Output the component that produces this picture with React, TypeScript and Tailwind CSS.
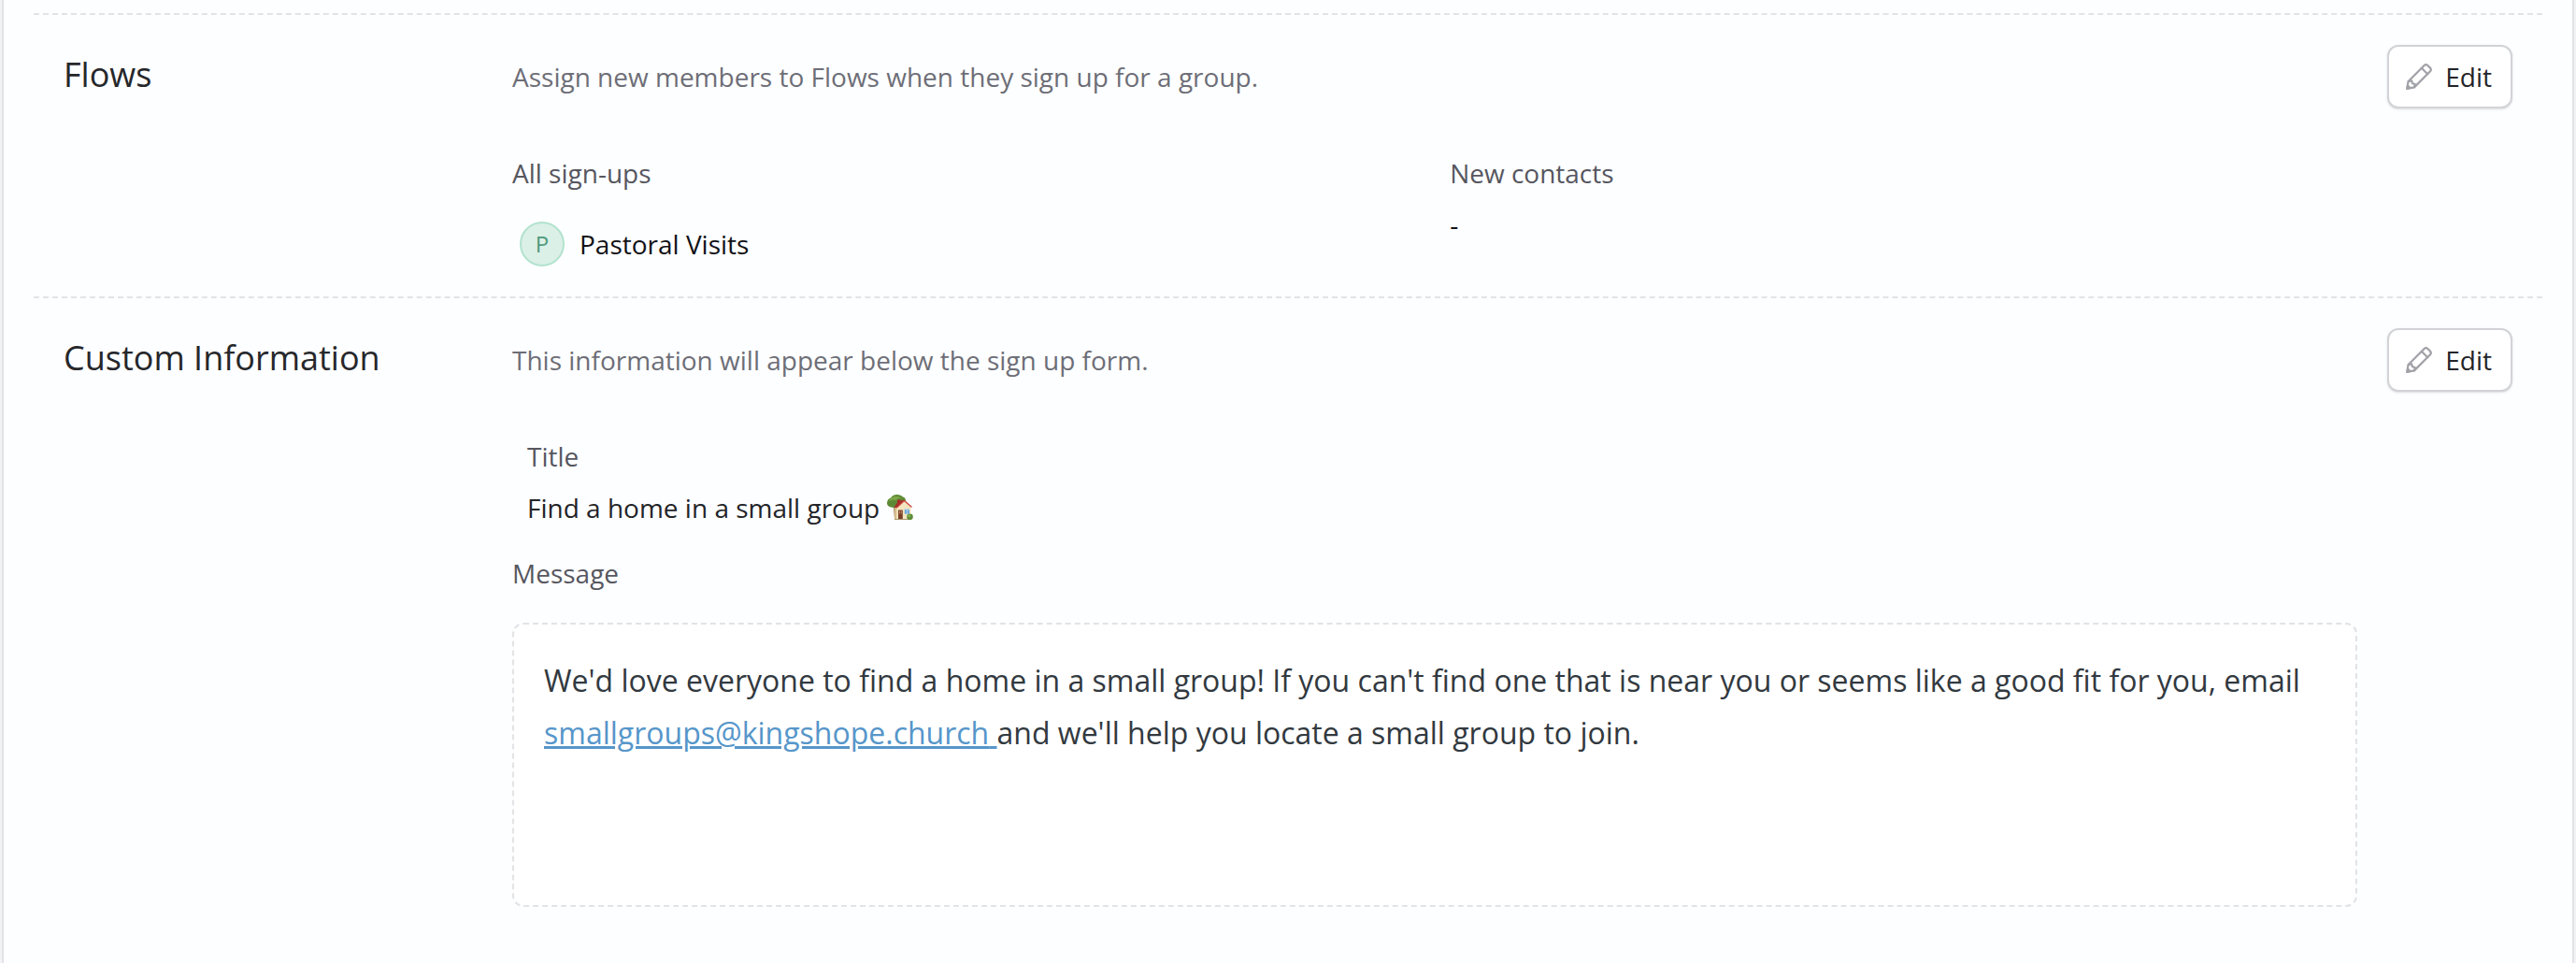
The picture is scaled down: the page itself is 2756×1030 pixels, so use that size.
import type { ReactNode } from "react";

function PencilIcon() {
  return (
    <svg
      viewBox="0 0 28 28"
      className="size-7 shrink-0"
      fill="none"
      stroke="#a1a1a8"
      strokeWidth="2.2"
      strokeLinecap="round"
      strokeLinejoin="round"
      aria-hidden="true"
    >
      <path d="M1.200 26.800 2.600 19 19.400 2.200a3 3 0 0 1 4.200 0l2.200 2.200a3 3 0 0 1 0 4.200L9 25.400Z" />
      <path d="M16.800 4.800 23.200 11.200M2.800 19l3.400-.6 .8 2.800 2.800 .8L9 25.200" />
      <path d="M1.400 26.600 2 23.600 4.400 26Z" fill="#a1a1a8" />
    </svg>
  );
}

function HouseGarden() {
  return (
    <svg viewBox="0 0 28 28" className="inline-block size-7 align-[-3px]" role="img" aria-label="House with garden">
      <path d="M7 12h3v14H8z" fill="#8a6a3c" />
      <path d="M0 9C0 6 2 4 4 3.500 5.500 1 8 0 10.500 0c3 0 5 1 6.500 2.500 2 .5 3 2 3 4.500 0 4-4 7-10 7S0 13 0 9Z" fill="#5c8a34" />
      <path d="M2 7c1-3 4-5 8-5 3 0 5 1 6 2-3-.5-5 .5-6 2-3-.5-6 0-8 1Z" fill="#7fa748" />
      <path d="M8 14.500 18.500 6.500 25.500 13.500V26H8Z" fill="#f4e5bf" />
      <path d="M8 14v12h2.200V13Z" fill="#d6bd88" />
      <path d="M11 5.500h3.500v4H11z" fill="#b02a26" />
      <path d="M7.500 13.800 11.500 7.500 18.500 5.500 16 8.500 10.200 14.200Z" fill="#a3302b" />
      <path d="M10.200 14 18.500 6.500 26.500 13.500" fill="none" stroke="#c9423a" strokeWidth="1.300" strokeLinejoin="round" />
      <path d="M12 16.500h4.800V26H12z" fill="#7b4028" />
      <path d="M13 17.500h1v3h-1zM14.800 17.500h1v3h-1z" fill="#b98561" />
      <path d="M18.800 15.500H24v5.200h-5.200z" fill="#6fa9da" />
      <path d="M18.800 15.500H24v.8h-5.200zM21.200 15.500h.6v5.200h-.6z" fill="#cfe3f2" />
      <path d="M8 26h18v1H8z" fill="#a99a75" />
      <circle cx="24.500" cy="23.800" r="3.300" fill="#5b8b35" />
      <circle cx="23.800" cy="22.800" r="1.600" fill="#85ae4f" />
    </svg>
  );
}

function EditButton({ section }: { section: string }) {
  return (
    <button
      type="button"
      aria-label={`Edit ${section}`}
      className="flex h-[68px] items-center gap-3.5 rounded-xl border-2 border-[#d2d3d6] bg-white pr-5 pl-[18px] text-[28px] leading-10 text-[#232428] shadow-sm"
    >
      <PencilIcon />
      Edit
    </button>
  );
}

function Section({ title, description, children }: { title: string; description: string; children: ReactNode }) {
  return (
    <section className="grid grid-cols-[448px_minmax(0,1fr)_auto] items-start gap-x-8 border-t-2 border-dashed border-[#e2e3e6] p-8">
      <h2 className="pt-2 text-[36px] leading-12 text-[#26272b]">{title}</h2>
      <div>
        <p className="flex min-h-[68px] items-center text-[#6d6e77]">{description}</p>
        <div className="pt-[49px]">{children}</div>
      </div>
      <EditButton section={title} />
    </section>
  );
}

function Label({ children }: { children: ReactNode }) {
  return <dt className="text-[#56575f]">{children}</dt>;
}

export default function App() {
  return (
    <div className="min-h-screen bg-[#f3f3f5] px-0.5 font-['Open_Sans',sans-serif] text-[28px] leading-10">
      <main className="min-h-screen border-x-2 border-[#e2e3e6] bg-[#fdfeff] px-8 pt-3.5">
        <Section title="Flows" description="Assign new members to Flows when they sign up for a group.">
          <dl className="grid grid-cols-2 gap-x-8 text-[#111216]">
            <div>
              <Label>All sign-ups</Label>
              <dd className="flex items-center gap-4 pt-8 pl-2">
                <span
                  aria-hidden="true"
                  className="flex size-12 items-center justify-center rounded-full border-2 border-[#b3e3cf] bg-[#dbf0e6] text-2xl text-[#4f9a7c]"
                >
                  P
                </span>
                Pastoral Visits
              </dd>
            </div>
            <div>
              <Label>New contacts</Label>
              <dd className="pt-[15px]">-</dd>
            </div>
          </dl>
        </Section>

        <Section title="Custom Information" description="This information will appear below the sign up form.">
          <dl className="text-[#232428]">
            <div className="pl-4">
              <Label>Title</Label>
              <dd className="pt-[15px]">
                Find a home in a small group <HouseGarden />
              </dd>
            </div>
            <div className="pt-[30px]">
              <Label>Message</Label>
              <dd className="mt-[33px] min-h-[304px] rounded-xl border-2 border-dashed border-[#e2e3e6] bg-white px-8 py-8 text-[32px] leading-14 text-[#323940]">
                We'd love everyone to find a home in a small group! If you can't find one that is near you or seems like a
                good fit for you, email{" "}
                <a
                  href="mailto:smallgroups@kingshope.church"
                  className="text-[#5696ca] underline decoration-[3px]"
                >
                  smallgroups@kingshope.church{" "}
                </a>
                and we'll help you locate a small group to join.
              </dd>
            </div>
          </dl>
        </Section>
      </main>
    </div>
  );
}
